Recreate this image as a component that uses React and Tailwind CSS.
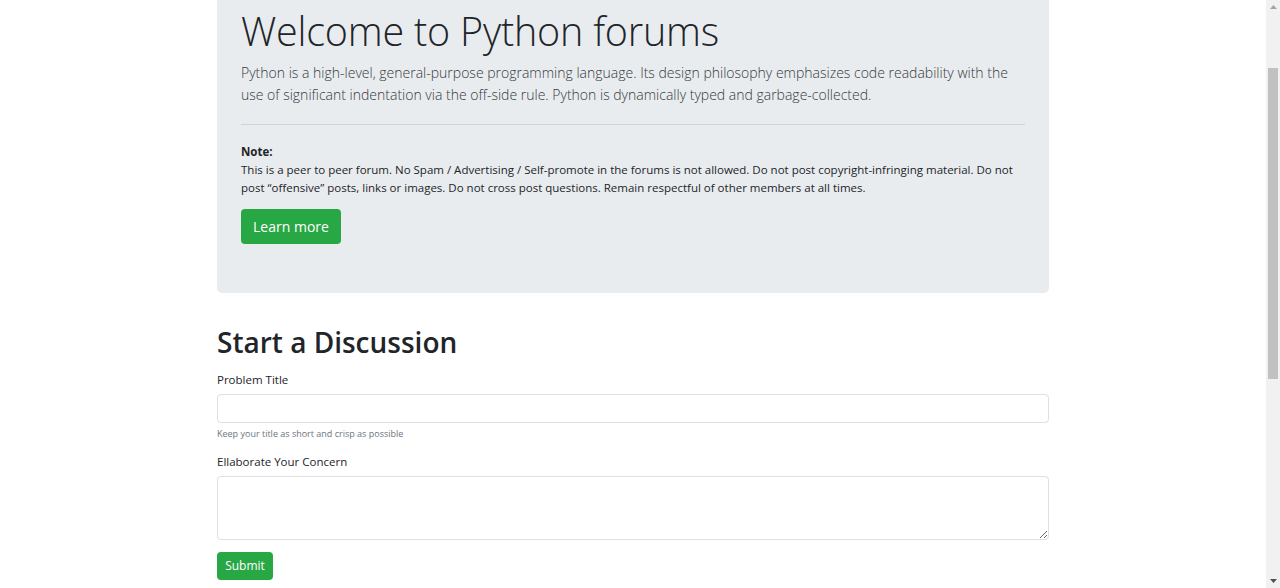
import React from 'react';

const noteText =
    'This is a peer to peer forum. No Spam / Advertising / Self-promote in the forums is not allowed. Do not post copyright-infringing material. Do not post \u201coffensive\u201d posts, links or images. Do not cross post questions. Remain respectful of other members at all times.';

const Scrollbar = () => (
    <div className="flex w-[14px] shrink-0 flex-col items-center bg-[#f1f1f1]">
        <div className="flex h-[14px] w-full items-center justify-center">
            <svg width="7" height="4" viewBox="0 0 7 4"><path d="M0 4L3.5 0L7 4Z" fill="#a3a3a3" /></svg>
        </div>
        <div className="mt-[54px] h-[311px] w-[10px] bg-[#c1c1c1]" />
        <div className="flex-1" />
        <div className="flex h-[14px] w-full items-center justify-center">
            <svg width="7" height="4" viewBox="0 0 7 4"><path d="M0 0L7 0L3.5 4Z" fill="#505050" /></svg>
        </div>
    </div>
);

const App = () => {
    return (
        <div className="flex h-[588px] overflow-hidden bg-white text-[#212529]" style={{ fontFamily: '"Open Sans", "Noto Sans", sans-serif' }}>
            <div className="flex-1 overflow-hidden">
                <div className="mx-auto w-[832px]">
                    {/* jumbotron */}
                    <div className="rounded-b-[5px] bg-[#e9ecef] px-6 pb-[49px] pt-[5px]">
                        <h1 className="text-[39.5px] font-light leading-[52px] tracking-[-0.2px]">Welcome to Python forums</h1>
                        <p className="mt-[5px] text-[14px] font-light leading-[22px] text-[#343a40]">
                            Python is a high-level, general-purpose programming language. Its design philosophy emphasizes code readability with the use of significant indentation via the off-side rule. Python is dynamically typed and garbage-collected.
                        </p>
                        <hr className="mt-[18px] border-black/10" />
                        <div className="mt-[18px] text-[11.5px] leading-[18px]">
                            <p className="font-bold">Note:</p>
                            <p>{noteText}</p>
                        </div>
                        <button type="button" className="mt-[12px] h-[35px] w-[100px] rounded-[4px] bg-[#28a745] text-[14px] text-white">
                            Learn more
                        </button>
                    </div>

                    <h2 className="mt-[31px] text-[28px] font-semibold leading-[36px]">Start a Discussion</h2>

                    <form className="mt-[11px]">
                        <label className="block text-[11.5px] leading-[18px]">Problem Title</label>
                        <input type="text" className="mt-[5px] block h-[29px] w-full rounded-[4px] border border-[#dcdfe3] bg-white" />
                        <small className="mt-[5px] block text-[9px] leading-[12px] text-[#6c757d]">Keep your title as short and crisp as possible</small>

                        <label className="mt-[13px] block text-[11.5px] leading-[18px]">Ellaborate Your Concern</label>
                        <textarea className="mt-[5px] block h-[64px] w-full rounded-[4px] border border-[#dcdfe3] bg-white" />

                        <button type="submit" className="mt-[12px] h-[28px] w-[56px] rounded-[4px] bg-[#28a745] text-[12px] text-white">
                            Submit
                        </button>
                    </form>
                </div>
            </div>
            <Scrollbar />
        </div>
    );
};

export default App;
